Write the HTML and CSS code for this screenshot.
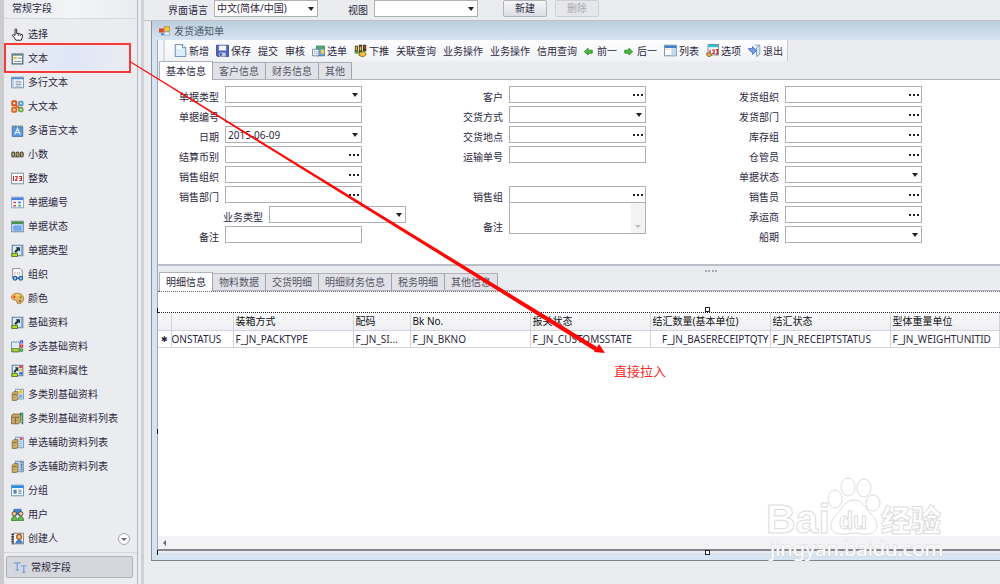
FILE: index.html
```html
<!DOCTYPE html>
<html lang="zh-CN">

<head>
    <meta charset="UTF-8">
    <meta name="viewport" content="width=device-width, initial-scale=1.0">
    <title>发货通知单</title>
    <link rel="stylesheet" href="styles.css">
</head>

<body>
    <!-- icon sheet -->
    <svg class="sheet" width="0" height="0" aria-hidden="true">
        <symbol id="i-hand" viewBox="0 0 16 16"><path d="M5 9V2.200q0-1.200 1-1.200t1 1.200V7l2-.5 1 .8 1.700-.2 .8.9 1.500.2V11l-1.300 4H6L4 12 2 9.500Q1.500 8 3 8z" fill="#fff" stroke="#222" stroke-width="1.200"/><path d="M9 7v3M11.500 8v2" stroke="#222"/></symbol>
        <symbol id="i-text" viewBox="0 0 16 16"><path d="M1.500 2.500h13v12h-13z" fill="#fff" stroke="#4a6575" stroke-width="1.500"/><path d="M1 1.500h14v3H1z" fill="#5f8090"/><path d="M2 2h12" stroke="#dce8b0" stroke-dasharray="1 1"/><path d="M3 6h4v3H3z" fill="#e9bf45"/><path d="M8 7.500h5M4 11.500h9" stroke="#547083"/></symbol>
        <symbol id="i-lines" viewBox="0 0 16 16"><path d="M.5 1.500h15v13H.5z" fill="#fff" stroke="#4f7bb0"/><path d="M1 2h14v2H1z" fill="#4b86cf"/><path d="M1 4h3v10H1z" fill="#b7cdea"/><path d="M5.500 6.500H13M5.500 8.500H13M5.500 10.500H13M5.500 12.500H13" stroke="#8090a0"/></symbol>
        <symbol id="i-office" viewBox="0 0 16 16" fill="none" stroke-width="2.300"><rect x="1.500" y="1.500" width="5" height="5" rx="1" stroke="#e0521b"/><rect x="9.800" y="2" width="4.500" height="4.500" rx="1" stroke="#4da1cf"/><rect x="1.500" y="9.500" width="5" height="5" rx="1" stroke="#e0641b"/><rect x="9.800" y="9.500" width="4.500" height="4.500" rx="1" stroke="#72a944"/><path d="M7 7l3 3" stroke="#e0521b"/></symbol>
        <symbol id="i-lang" viewBox="0 0 16 16"><path d="M1.500 3.500h13v12h-13z" fill="#5b94e3" stroke="#456e9e"/><path d="M1 2.500h14" stroke="#538053" stroke-width="2" stroke-dasharray="1 1"/><path d="M4.500 13L8 5.500 11.500 13M6 10.500h4" fill="none" stroke="#e6f2ff" stroke-width="1.500"/></symbol>
        <symbol id="i-dec" viewBox="0 0 16 16"><g fill="#b0a878" stroke="#4c4734" stroke-width="1.300"><rect x="1" y="5" width="3.500" height="6" rx="1.500"/><rect x="6.300" y="5" width="3.500" height="6" rx="1.500"/><rect x="11.500" y="5" width="3.500" height="6" rx="1.500"/></g><path d="M5.500 11.500v-1M10.800 11.500v-1" stroke="#222"/></symbol>
        <symbol id="i-int" viewBox="0 0 16 16"><path d="M.5 1.500h15v13H.5z" fill="#fff" stroke="#60758a"/><path d="M3 5v6M5 5.500h2.500v2L5.500 10.500H8M10 5.500h3v5h-3M10.500 8H13" fill="none" stroke="#cc2d2d" stroke-width="1.400"/></symbol>
        <symbol id="i-code" viewBox="0 0 16 16"><path d="M.5 1.500h15v13H.5z" fill="#eef5ff" stroke="#7294c5"/><path d="M1 2h14v3H1z" fill="#4c82dc"/><path d="M3 7h3v2H3zM3 11h3v2H3z" fill="#d33b32"/><path d="M9 7h3v2H9z" fill="#356bbd"/><path d="M9 11h3v2H9z" fill="#35a04a"/></symbol>
        <symbol id="i-state" viewBox="0 0 16 16"><path d="M.5 1.500h15v13H.5z" fill="#b8d4f5" stroke="#667f9c"/><path d="M1 2h14v3H1z" fill="#4b9447"/><path d="M3.500 7.500h9v5h-9z" fill="#78adf0" stroke="#3d77c7" stroke-dasharray="1 1"/></symbol>
        <symbol id="i-base" viewBox="0 0 16 16"><path d="M1.500 1.500h13v13h-13z" fill="#dceaf6" stroke="#637f9d" stroke-width="1.400"/><path d="M4 9l3-3-1-2h5v5l-2-1-3 3z" fill="#1f3a3c"/><path d="M12 2h2v12h-2z" fill="#8bb3d2"/><path d="M1 11.500h7v4H1z" fill="#b8dc22" stroke="#44641a"/></symbol>
        <symbol id="i-org" viewBox="0 0 16 16"><path d="M2 .5h9l3 3v9H2z" fill="#f8f8f8" stroke="#777"/><path d="M5 5v3M8 5v3M10.500 5v3" stroke="#aaa"/><g fill="#9ccaf2" stroke="#225e9d" stroke-width="1.500"><circle cx="5" cy="12.500" r="2.300"/><circle cx="12" cy="12.500" r="2.300"/><path d="M7 12.500h3"/></g></symbol>
        <symbol id="i-color" viewBox="0 0 16 16"><path d="M8 1.500c4 0 7.500 2.500 7.500 6.500 0 4-3 6.500-6 6.500-3 0-1.500-4-4-4.500C3 9.500.5 9 .5 6.500S4 1.500 8 1.500z" fill="#efb558" stroke="#a86e2a"/><circle cx="4" cy="6" r="1.300" fill="#d83d2d"/><circle cx="8" cy="4" r="1.300" fill="#fff08a"/><circle cx="12" cy="6.500" r="1.400" fill="#45a642"/><circle cx="11" cy="11" r="1.400" fill="#3c72ca"/></symbol>
        <symbol id="i-multi" viewBox="0 0 16 16"><path d="M.5 2.500h10v12H.5z" fill="#dfecf7" stroke="#637f9d"/><path d="M1 10.500h9v4H1z" fill="#a5cf3c" stroke="#5e7d22"/><g fill="#fff" stroke-width="1.500"><path d="M11.700 1.200h2.500v2.500h-2.500z" stroke="#4b60e0"/><path d="M11.700 6.200h2.500v2.500h-2.500z" stroke="#d53434"/><path d="M11.700 11.200h2.500v2.500h-2.500z" stroke="#31a13c"/></g></symbol>
        <symbol id="i-prop" viewBox="0 0 16 16"><path d="M1.500 1.500h13v13h-13z" fill="#dceaf6" stroke="#637f9d" stroke-width="1.400"/><path d="M3 9l3-3-1-2h4v5l-2-1-2 3z" fill="#1f3a3c"/><path d="M1 11.500h7v4H1z" fill="#b8dc22" stroke="#44641a"/><path d="M10 2h4v3h-4z" fill="#e34a35"/><path d="M10 6h4v3h-4z" fill="#e8c642"/><path d="M10 10h4v3h-4z" fill="#3673d0"/></symbol>
        <symbol id="i-cat" viewBox="0 0 16 16"><path d="M5.500 1.500h10v12h-10z" fill="#e3effa" stroke="#6389b4"/><path d="M10 2h4v5h-4z" fill="#f2c231"/><path d="M10 8h4v4h-4z" fill="#79a8da"/><path d="M1.500 6.500l2-2h5v9l-2 2h-5z" fill="#c9ac6c" stroke="#806634"/><path d="M2 8h5M4 11h1" stroke="#806634"/></symbol>
        <symbol id="i-catlist" viewBox="0 0 16 16"><path d="M.5 4.500l2-2h9v10l-2 2h-9z" fill="#c9ac6c" stroke="#705b30"/><path d="M1 6.500h9M5.500 7v7M3 10h1M7 10h1" stroke="#705b30"/><path d="M11 1h4v14h-2V4h-2z" fill="#4a6580"/><path d="M12 2h3v2h-3zM13 6h2v2h-2zM13 10h2v2h-2z" fill="#39c54c"/></symbol>
        <symbol id="i-aux" viewBox="0 0 16 16"><path d="M5.500 1.500h10v13h-10z" fill="#d3e7fa" stroke="#6389b4"/><path d="M10 7h4M10 9.500h4M10 12h4" stroke="#83a8cf"/><path d="M11 2h3v3h-3z" fill="#db4b40"/><path d="M1.500 6.500l2-2h5v9l-2 2h-5z" fill="#c9ac6c" stroke="#806634"/><path d="M2 8h5M4 11h1" stroke="#806634"/></symbol>
        <symbol id="i-auxlist" viewBox="0 0 16 16"><path d="M5.500 1.500h10v13h-10z" fill="#b5d1eb" stroke="#6389b4"/><path d="M13 2v12" stroke="#4b7092" stroke-width="2" stroke-dasharray="2 1"/><path d="M1.500 6.500l2-2h5v9l-2 2h-5z" fill="#c9ac6c" stroke="#806634"/><path d="M2 8h5M4 11h1" stroke="#806634"/></symbol>
        <symbol id="i-group" viewBox="0 0 16 16"><path d="M.5 1.500h15v13H.5z" fill="#fff" stroke="#3a77b8"/><path d="M1 2h14v3H1z" fill="#2d8ae3"/><path d="M3 7h4v5H3z" fill="#5584b5"/><path d="M9 7.500h4M9 9.500h4M9 11.500h4" stroke="#456f9c"/></symbol>
        <symbol id="i-users" viewBox="0 0 16 16"><path d="M3 1h10v8H3z" fill="#3e83d4"/><circle cx="4" cy="7" r="2.700" fill="#efc08e" stroke="#4a3a30"/><circle cx="12" cy="7" r="2.700" fill="#efc08e" stroke="#4a3a30"/><path d="M.5 15.500c0-7 7-7 7 0zM8.500 15.500c0-7 7-7 7 0z" fill="#66b848" stroke="#347a2d"/></symbol>
        <symbol id="i-creator" viewBox="0 0 16 16"><path d="M2.500 1.500h13v13h-13z" fill="#f3f5f8" stroke="#666"/><path d="M2 2v13" stroke="#333" stroke-width="3" stroke-dasharray="2 1"/><circle cx="10" cy="6" r="3" fill="#f3bf80" stroke="#a35822" stroke-width="1.500"/><path d="M5.500 14c0-6 9-6 9 0z" fill="#4380ce"/></symbol>
        <symbol id="i-tt" viewBox="0 0 16 16"><path d="M0 2.500h8M4 2.500V11M2 11h4M8.500 6h7M12 6v8M10 14h4" fill="none" stroke="#78a6e2" stroke-width="1.700"/></symbol>
        <symbol id="i-form" viewBox="0 0 16 16"><path d="M7.500 2.500h8v7h-8z" fill="#f6c746" stroke="#a67b18"/><path d="M0 5h7v6H0z" fill="#d7462d"/><path d="M8 10h7v5H8z" fill="#e8f0fa" stroke="#8aa2c0"/><path d="M3 12h4v3H3z" fill="#4b7fce"/></symbol>
        <symbol id="i-new" viewBox="0 0 16 16"><path d="M1.500.5h9l4 4v11h-13z" fill="#d9eefb" stroke="#4e7ba5"/><path d="M3 2h6v4H3z" fill="#fff"/><path d="M10.500.5v4h4" fill="#fff" stroke="#4e7ba5"/></symbol>
        <symbol id="i-save" viewBox="0 0 16 16"><path d="M.5 1.500h15v14H2l-1.500-1.500z" fill="#4d63bb" stroke="#313f86"/><path d="M3.500 2h9v6h-9z" fill="#f4f6fb"/><path d="M4 10.500h8v5H4z" fill="#c0c9de"/><path d="M5 11.500h2v3H5z" fill="#34458e"/></symbol>
        <symbol id="i-pick" viewBox="0 0 16 16"><path d="M5.500 2.500h10v12h-10z" fill="#6ba5e6" stroke="#416b9e"/><path d="M6 3h9v3H6z" fill="#4eab48"/><path d="M11 7h4v5h-4z" fill="#f4d34b"/><path d="M.5 6.500h8v8h-8z" fill="#fff" stroke="#58738e"/><path d="M2 9.500h5M2 12h5" stroke="#5d86ae" stroke-dasharray="2 1"/></symbol>
        <symbol id="i-push" viewBox="0 0 16 16"><path d="M1 2h4v9H1zM6 1h4v10H6zM11 1h4v8h-4z" fill="#3b3520"/><path d="M2 3h2v5H2zM7 3h2v5H7z" fill="#d9bd32"/><path d="M12 2h2v4h-2z" fill="#d33b2a"/><path d="M7 10l6-1 2 4-4 3-5-2z" fill="#efc238" stroke="#725e20"/><path d="M1 9h5v3H1z" fill="#63a342"/></symbol>
        <symbol id="i-left" viewBox="0 0 12 16"><path d="M.5 9.500l5-4.500v2.500h5.500v4H5.500V14z" fill="#4cbd3c" stroke="#237b20"/></symbol>
        <symbol id="i-right" viewBox="0 0 12 16"><path d="M11.500 9.500L6.500 5v2.500H1v4h5.500V14z" fill="#4cbd3c" stroke="#237b20"/></symbol>
        <symbol id="i-list" viewBox="0 0 16 16"><path d="M.5 1.500h15v13H.5z" fill="#fff" stroke="#5b7896"/><path d="M1 2h14v3H1z" fill="#3e80ce"/><path d="M9 5h6v9H9z" fill="#bfd9f0"/><path d="M2 6.500h5" stroke="#dba934" stroke-dasharray="1 1"/></symbol>
        <symbol id="i-opt" viewBox="0 0 16 16"><path d="M2.500.5h13v13h-13z" fill="#fff" stroke="#667"/><path d="M3 1h12v3H3z" fill="#2ec0d2"/><path d="M5 7v5M7.500 7.500H10v4H7.500M12 7h2v5h-2" fill="none" stroke="#c9302c" stroke-width="1.600"/><path d="M1 11h5l1 3-3 2-3-2z" fill="#dcae4e" stroke="#7f6125"/></symbol>
        <symbol id="i-exit" viewBox="0 0 16 16"><path d="M8.500 1.500h6v11l-4 3v-11l4-3" fill="#d7ecfb" stroke="#6b93b8"/><path d="M.5 5.500h5V3l5 5-5 5v-2.500L2 8z" fill="#749ce8" stroke="#4168b4"/></symbol>
    </svg>

    <div class="app">
        <aside class="sidebar">
            <h2>常规字段</h2>
            <nav class="fields">
                <button class="field-item"><svg><use href="#i-hand"/></svg>选择</button>
                <button class="field-item active"><svg><use href="#i-text"/></svg>文本</button>
                <button class="field-item"><svg><use href="#i-lines"/></svg>多行文本</button>
                <button class="field-item"><svg><use href="#i-office"/></svg>大文本</button>
                <button class="field-item"><svg><use href="#i-lang"/></svg>多语言文本</button>
                <button class="field-item"><svg><use href="#i-dec"/></svg>小数</button>
                <button class="field-item"><svg><use href="#i-int"/></svg>整数</button>
                <button class="field-item"><svg><use href="#i-code"/></svg>单据编号</button>
                <button class="field-item"><svg><use href="#i-state"/></svg>单据状态</button>
                <button class="field-item"><svg><use href="#i-base"/></svg>单据类型</button>
                <button class="field-item"><svg><use href="#i-org"/></svg>组织</button>
                <button class="field-item"><svg><use href="#i-color"/></svg>颜色</button>
                <button class="field-item"><svg><use href="#i-base"/></svg>基础资料</button>
                <button class="field-item"><svg><use href="#i-multi"/></svg>多选基础资料</button>
                <button class="field-item"><svg><use href="#i-prop"/></svg>基础资料属性</button>
                <button class="field-item"><svg><use href="#i-cat"/></svg>多类别基础资料</button>
                <button class="field-item"><svg><use href="#i-catlist"/></svg>多类别基础资料列表</button>
                <button class="field-item"><svg><use href="#i-aux"/></svg>单选辅助资料列表</button>
                <button class="field-item"><svg><use href="#i-auxlist"/></svg>多选辅助资料列表</button>
                <button class="field-item"><svg><use href="#i-group"/></svg>分组</button>
                <button class="field-item"><svg><use href="#i-users"/></svg>用户</button>
                <button class="field-item"><svg><use href="#i-creator"/></svg>创建人</button>
                <button class="more" aria-label="更多"></button>
            </nav>
            <button class="category"><svg><use href="#i-tt"/></svg>常规字段</button>
        </aside>

        <main class="main">
            <div class="topbar">
                <label for="lang">界面语言</label>
                <span class="drop top-select"><select id="lang"><option>中文(简体/中国)</option></select></span>
                <label for="view" class="view-label">视图</label>
                <span class="drop top-select"><select id="view"><option></option></select></span>
                <button class="btn btn-new">新建</button>
                <button class="btn" disabled>删除</button>
            </div>

            <section class="window">
                <h1><svg><use href="#i-form"/></svg>发货通知单</h1>
                <div class="window-body">
                    <div class="toolbar">
                        <button><svg><use href="#i-new"/></svg>新增</button>
                        <button><svg><use href="#i-save"/></svg>保存</button>
                        <button>提交</button>
                        <button>审核</button>
                        <button><svg><use href="#i-pick"/></svg>选单</button>
                        <button><svg><use href="#i-push"/></svg>下推</button>
                        <button>关联查询</button>
                        <button>业务操作</button>
                        <button>业务操作</button>
                        <button>信用查询</button>
                        <button class="step"><svg><use href="#i-left"/></svg>前一</button>
                        <button class="step"><svg><use href="#i-right"/></svg>后一</button>
                        <button><svg><use href="#i-list"/></svg>列表</button>
                        <button><svg><use href="#i-opt"/></svg>选项</button>
                        <button><svg><use href="#i-exit"/></svg>退出</button>
                    </div>

                    <div class="tabs">
                        <button class="tab active">基本信息</button>
                        <button class="tab">客户信息</button>
                        <button class="tab">财务信息</button>
                        <button class="tab">其他</button>
                    </div>

                    <form class="bill">
                        <div class="col">
                            <div class="row"><label for="f1">单据类型</label><span class="drop"><select id="f1"><option></option></select></span></div>
                            <div class="row"><label for="f2">单据编号</label><input type="text" id="f2"></div>
                            <div class="row"><label for="f3">日期</label><span class="drop"><select id="f3"><option>2015-06-09</option></select></span></div>
                            <div class="row"><label for="f4">结算币别</label><span class="lookup"><input type="text" id="f4"><button type="button" aria-label="查找"></button></span></div>
                            <div class="row"><label for="f5">销售组织</label><span class="lookup"><input type="text" id="f5"><button type="button" aria-label="查找"></button></span></div>
                            <div class="row"><label for="f6">销售部门</label><span class="lookup"><input type="text" id="f6"><button type="button" aria-label="查找"></button></span></div>
                            <div class="row indent"><label for="f7">业务类型</label><span class="drop"><select id="f7"><option></option></select></span></div>
                            <div class="row"><label for="f8">备注</label><input type="text" id="f8"></div>
                        </div>
                        <div class="col">
                            <div class="row"><label for="g1">客户</label><span class="lookup"><input type="text" id="g1"><button type="button" aria-label="查找"></button></span></div>
                            <div class="row"><label for="g2">交货方式</label><span class="drop"><select id="g2"><option></option></select></span></div>
                            <div class="row"><label for="g3">交货地点</label><span class="lookup"><input type="text" id="g3"><button type="button" aria-label="查找"></button></span></div>
                            <div class="row"><label for="g4">运输单号</label><input type="text" id="g4"></div>
                            <div class="row blank"></div>
                            <div class="row"><label for="g5">销售组</label><span class="lookup"><input type="text" id="g5"><button type="button" aria-label="查找"></button></span></div>
                            <div class="row memo"><label for="g6">备注</label><span class="area"><textarea id="g6"></textarea></span></div>
                        </div>
                        <div class="col">
                            <div class="row"><label for="h1">发货组织</label><span class="lookup"><input type="text" id="h1"><button type="button" aria-label="查找"></button></span></div>
                            <div class="row"><label for="h2">发货部门</label><span class="lookup"><input type="text" id="h2"><button type="button" aria-label="查找"></button></span></div>
                            <div class="row"><label for="h3">库存组</label><span class="lookup"><input type="text" id="h3"><button type="button" aria-label="查找"></button></span></div>
                            <div class="row"><label for="h4">仓管员</label><span class="lookup"><input type="text" id="h4"><button type="button" aria-label="查找"></button></span></div>
                            <div class="row"><label for="h5">单据状态</label><span class="drop"><select id="h5"><option></option></select></span></div>
                            <div class="row"><label for="h6">销售员</label><span class="lookup"><input type="text" id="h6"><button type="button" aria-label="查找"></button></span></div>
                            <div class="row"><label for="h7">承运商</label><span class="lookup"><input type="text" id="h7"><button type="button" aria-label="查找"></button></span></div>
                            <div class="row"><label for="h8">船期</label><span class="drop"><select id="h8"><option></option></select></span></div>
                        </div>
                    </form>

                    <div class="splitter"></div>

                    <div class="tabs">
                        <button class="tab active">明细信息</button>
                        <button class="tab">物料数据</button>
                        <button class="tab">交货明细</button>
                        <button class="tab">明细财务信息</button>
                        <button class="tab">税务明细</button>
                        <button class="tab">其他信息</button>
                    </div>

                    <div class="grid-area">
                        <div class="grid-tools"></div>
                        <table>
                            <colgroup>
                                <col class="c-mark"><col class="c-status"><col class="c-wide"><col class="c-code"><col class="c-wide"><col class="c-wide"><col class="c-wide"><col class="c-wide"><col>
                            </colgroup>
                            <thead>
                                <tr>
                                    <th></th>
                                    <th></th>
                                    <th>装箱方式</th>
                                    <th>配码</th>
                                    <th>Bk No.</th>
                                    <th>报关状态</th>
                                    <th>结汇数量(基本单位)</th>
                                    <th>结汇状态</th>
                                    <th>型体重量单位</th>
                                </tr>
                            </thead>
                            <tbody>
                                <tr>
                                    <td class="mark">✱</td>
                                    <td class="cut">ONSTATUS</td>
                                    <td>F_JN_PACKTYPE</td>
                                    <td>F_JN_SI...</td>
                                    <td>F_JN_BKNO</td>
                                    <td>F_JN_CUSTOMSSTATE</td>
                                    <td class="num">F_JN_BASERECEIPTQTY</td>
                                    <td>F_JN_RECEIPTSTATUS</td>
                                    <td>F_JN_WEIGHTUNITID</td>
                                </tr>
                            </tbody>
                        </table>
                        <div class="scroll"></div>
                        <i class="handle handle-top"></i>
                        <i class="handle handle-bottom"></i>
                        <i class="nub nub-top"></i>
                        <i class="nub nub-mid"></i>
                        <i class="nub nub-bottom"></i>
                    </div>
                </div>
            </section>
        </main>

        <!-- drag hint -->
        <div class="hint-box"></div>
        <svg class="hint-arrow" width="480" height="300" viewBox="0 0 480 300">
            <path d="M0 0L467 286l-2 4L0 1.200z" fill="#fe0606"/>
            <path d="M475 292l-11-1 5-8z" fill="#fe0606"/>
        </svg>
        <span class="hint-text">直接拉入</span>

        <svg class="watermark" width="184" height="90" viewBox="0 0 184 90">
            <g class="wm-line">
                <ellipse cx="69" cy="31" rx="7" ry="9"/>
                <ellipse cx="82" cy="19" rx="7" ry="9"/>
                <ellipse cx="98" cy="20" rx="7" ry="9"/>
                <ellipse cx="107" cy="35" rx="7" ry="8"/>
                <path d="M88 32c9 0 11 8 17 14 8 7 9 19-3 20-6 1-8-1-14-1s-8 2-14 1c-12-1-11-13-3-20 6-6 8-14 17-14z"/>
                <text x="0" y="65" class="wm-latin">Bai</text>
                <text x="73" y="61" class="wm-du">du</text>
                <text x="115" y="63" class="wm-cjk">经验</text>
            </g>
            <text x="4" y="88" class="wm-url">jingyan.baidu.com</text>
        </svg>
    </div>
</body>

</html>
```
FILE: styles.css
```css
* {
    box-sizing: border-box;
}

body {
    margin: 0;
    font: 10px/14px "Noto Sans", "Noto Sans CJK SC", sans-serif;
    color: #2b2840;
    background-color: #ebecf0;
}

button,
input,
select,
textarea {
    font: inherit;
    color: inherit;
    margin: 0;
    padding: 0;
    border: none;
    border-radius: 0;
    background: none;
    white-space: nowrap;
}

svg {
    flex: none;
    width: 13px;
    height: 13px;
}

.sheet {
    position: absolute;
    width: 0;
    height: 0;
}

.app {
    position: relative;
    display: flex;
    min-height: 100vh;
    overflow: hidden;
}

/* left toolbox */
.sidebar {
    flex: none;
    width: 138px;
    border-left: 4px solid #cbcbcd;
    border-right: 1px solid #b4b5bd;
    background-color: #ebecf0;
}

.sidebar h2 {
    margin: 0;
    height: 19px;
    padding: 1px 8px;
    font-size: 10px;
    font-weight: normal;
    background: linear-gradient(90deg, #ebecf0, #f3f4f6, #ebecf0);
    border-bottom: 1px solid #d8d9de;
}

.fields {
    position: relative;
    display: flex;
    flex-direction: column;
    padding: 3px 3px 2px 2px;
    border-bottom: 1px solid #d5d6dc;
}

.field-item {
    display: flex;
    align-items: center;
    gap: 4px;
    height: 24px;
    padding-left: 5px;
}

.field-item.active {
    background: linear-gradient(90deg, #ebecf0, #dfe6f8 50%, #ebecf0);
}

.more {
    position: absolute;
    right: 7px;
    bottom: 7px;
    width: 12px;
    height: 12px;
    border: 1px solid #a5a6ae;
    border-radius: 50%;
    background-color: #fafafa;
}

.more::after {
    content: "";
    display: block;
    width: 0;
    margin: 1px auto 0;
    border: 3px solid transparent;
    border-top-color: #666773;
    border-bottom: none;
}

.category {
    display: flex;
    align-items: center;
    gap: 4px;
    width: 127px;
    height: 22px;
    margin: 3px 0 0 2px;
    padding-left: 7px;
    border: 1px solid #b0b1b9;
    border-radius: 2px;
    background-color: #d6d7dc;
}

/* right side */
.main {
    flex: 1;
    min-width: 0;
    display: flex;
    flex-direction: column;
    margin-left: 3px;
    padding-bottom: 23px;
    border-left: 3px solid #cfd0d8;
}

.topbar {
    display: flex;
    align-items: center;
    height: 21px;
    padding: 0 0 4px 24px;
    border-bottom: 1px solid #c0c1c7;
}

.topbar label {
    width: 46px;
    padding-top: 3px;
}

.topbar .view-label {
    width: 26px;
    margin-left: 30px;
}

.drop {
    position: relative;
    display: block;
    width: 137px;
}

.top-select {
    width: 104px;
}

.drop::after {
    content: "";
    position: absolute;
    right: 4px;
    top: 7px;
    border: 3px solid transparent;
    border-top: 4px solid #22202f;
    border-bottom: none;
    pointer-events: none;
}

input,
select,
textarea,
.lookup {
    display: block;
    width: 100%;
    height: 17px;
    padding: 0 2px;
    border: 1px solid #b0b0b0;
    background-color: #fff;
    appearance: none;
    outline: none;
}

.btn {
    width: 44px;
    height: 17px;
    margin-left: 8px;
    border: 1px solid #b3b4bd;
    border-radius: 2px;
    background: linear-gradient(#f6f6f8, #dddee4);
}

.btn-new {
    margin-left: 25px;
}

.btn:disabled {
    color: #a9aab2;
    border-color: #d0d1d6;
    background: #e6e7eb;
}

.window {
    flex: 1;
    display: flex;
    flex-direction: column;
    margin-left: 7px;
    padding: 0 0 7px 5px;
    border-left: 1px solid #8d929a;
    border-bottom: 1px solid #7e8188;
    background-color: #d6e4f1;
}

.window h1 {
    display: flex;
    align-items: center;
    gap: 4px;
    height: 19px;
    margin: 0 0 0 -5px;
    padding-left: 7px;
    font-size: 10px;
    font-weight: normal;
    color: #4a5868;
    background: linear-gradient(#bccddb, #d6e4f1);
}

.window h1 svg {
    width: 11px;
}

.window-body {
    flex: 1;
    display: flex;
    flex-direction: column;
    border-left: 1px solid #a3a7b0;
    background-color: #ebecf0;
}

.toolbar {
    align-self: flex-start;
    display: flex;
    gap: 7px;
    height: 21px;
    padding: 0 4px 0 11px;
    border-left: 5px solid #f4f5f7;
    border-right: 1px solid #c9cad0;
    background: linear-gradient(#fdfdfe, #f1f2f5);
    box-shadow: inset 2px 0 #dcdde2;
}

.toolbar button {
    display: flex;
    align-items: center;
    gap: 2px;
}

.toolbar .step svg {
    width: 9px;
}

.toolbar .step {
    gap: 4px;
}

.tabs {
    display: flex;
    align-items: flex-end;
    height: 19px;
    padding-left: 1px;
    border-bottom: 1px solid #b1b2bb;
}

.tab {
    height: 17px;
    padding: 0 6px;
    color: #565466;
    background-color: #e1e2e7;
    border-top: 1px solid #b1b2bb;
    border-right: 1px solid #a2a3ae;
}

.tab.active {
    height: 19px;
    margin-bottom: -1px;
    padding: 0 6px;
    color: #2b2840;
    background-color: #fff;
    border-left: 1px solid #b1b2bb;
}

.bill {
    display: grid;
    grid-template-columns: 284fr 276fr 282fr;
    padding: 6px 0 21px;
    background-color: #fff;
    border-bottom: 2px solid #bcbdc6;
}

.col {
    display: flex;
    flex-direction: column;
    gap: 3px;
}

.row {
    display: flex;
    align-items: center;
    gap: 6px;
    height: 17px;
}

.row label {
    flex: none;
    width: 61px;
    padding-top: 4px;
    text-align: right;
}

.row input,
.row .lookup,
.area {
    width: 137px;
}

.indent {
    padding-left: 44px;
}

.lookup {
    display: flex;
    padding: 0;
}

.row .lookup input {
    flex: 1;
    width: 0;
    height: auto;
    border: none;
}

.lookup button {
    width: 14px;
}

/* three dots */
.lookup button::after {
    content: "";
    display: block;
    width: 2px;
    height: 2px;
    margin: 0 0 0 2px;
    color: #22202f;
    background-color: currentColor;
    box-shadow: 4px 0, 8px 0;
}

.memo {
    align-items: flex-end;
    height: 32px;
    margin-top: -4px;
}

.area {
    position: relative;
}

textarea {
    height: 32px;
    resize: none;
    box-shadow: inset -14px 0 #f3f3f5;
}

.area::after {
    content: "";
    position: absolute;
    right: 5px;
    bottom: 6px;
    border: 3px solid transparent;
    border-top-color: #b9bac0;
    border-bottom: none;
}

.splitter {
    width: 12px;
    height: 6px;
    margin-left: 65%;
    border-bottom: 2px dotted #a9aab2;
}

.grid-area {
    flex: 1;
    position: relative;
    display: flex;
    flex-direction: column;
    border-bottom: 2px solid #85878e;
    margin-bottom: 2px;
    background-color: #fff;
}

.grid-tools {
    height: 22px;
    border-top: 1px dotted #666;
    border-bottom: 1px dotted #222;
}

table {
    width: 100%;
    table-layout: fixed;
    border-collapse: collapse;
}

th,
td {
    height: 17px;
    padding: 0 2px;
    overflow: hidden;
    white-space: nowrap;
    text-align: left;
    font-weight: normal;
    border-right: 1px solid #d3d4da;
    border-bottom: 1px solid #d3d4da;
}

th {
    color: #111;
    background: linear-gradient(#fafafb, #eeeff2);
}

.c-mark {
    width: 13px;
}

.c-status {
    width: 62px;
}

.c-wide {
    width: 120px;
}

.c-code {
    width: 57px;
}

td.mark,
td.cut {
    padding: 0;
}

td.mark {
    font-size: 8px;
    text-align: center;
}

td.num {
    padding: 0 1px;
    text-align: right;
}

.scroll {
    height: 13px;
    margin-top: auto;
    padding: 4px 5px;
    background-color: #f3f3f5;
}

.scroll::before {
    content: "";
    display: block;
    width: 0;
    border: 3px solid transparent;
    border-right-color: #666773;
    border-left: none;
}

.handle {
    position: absolute;
    left: 65%;
    width: 5px;
    height: 5px;
    border: 1px solid #222;
    background-color: #fff;
}

.handle-top {
    top: 16px;
}

.handle-bottom {
    bottom: -6px;
}

.nub {
    position: absolute;
    left: -1px;
    width: 1px;
    height: 5px;
    background-color: #111;
}

.nub-top {
    top: 17px;
}

.nub-mid {
    top: 138px;
}

.nub-bottom {
    bottom: -6px;
}

/* drag hint on top of everything */
.hint-box {
    position: absolute;
    left: 4px;
    top: 43px;
    width: 127px;
    height: 30px;
    border: 2px solid #f53a3a;
    pointer-events: none;
}

.hint-arrow {
    position: absolute;
    left: 130px;
    top: 61px;
    width: 480px;
    height: 300px;
    pointer-events: none;
}

.hint-text {
    position: absolute;
    left: 614px;
    top: 362px;
    font-size: 13px;
    line-height: 18px;
    color: #f52a2a;
}

.watermark {
    position: absolute;
    right: 50px;
    bottom: 26px;
    width: 184px;
    height: 90px;
    overflow: visible;
    pointer-events: none;
}

.wm-line {
    fill: #fff;
    stroke: #dcdcdc;
    stroke-width: 1px;
}

.wm-latin {
    font: bold 41px "Liberation Sans", sans-serif;
}

.wm-du {
    font: bold 23px "Liberation Sans", sans-serif;
}

.wm-cjk {
    font: 900 30px "Noto Sans CJK SC", sans-serif;
}

.wm-url {
    font: 20px "Noto Sans", sans-serif;
    fill: #fff;
    stroke: #d2d2d2;
    stroke-width: 1px;
    paint-order: stroke;
}
```
